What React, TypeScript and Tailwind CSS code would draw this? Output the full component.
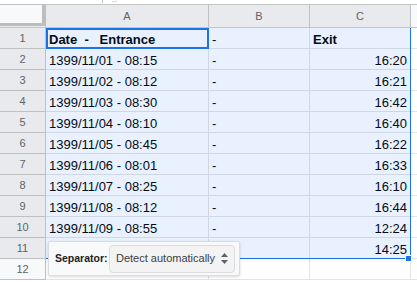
import React from "react";

const rows: [string, string, string][] = [
  ["Date  -   Entrance", "-", "Exit"],
  ["1399/11/01 - 08:15", "-", "16:20"],
  ["1399/11/02 - 08:12", "-", "16:21"],
  ["1399/11/03 - 08:30", "-", "16:42"],
  ["1399/11/04 - 08:10", "-", "16:40"],
  ["1399/11/05 - 08:45", "-", "16:22"],
  ["1399/11/06 - 08:01", "-", "16:33"],
  ["1399/11/07 - 08:25", "-", "16:10"],
  ["1399/11/08 - 08:12", "-", "16:44"],
  ["1399/11/09 - 08:55", "-", "12:24"],
  ["", "", "14:25"],
  ["", "", ""],
];

function UpDown() {
  return (
    <svg width="9" height="13" viewBox="0 0 9 13" className="text-[#5f6368]">
      <path d="M4.5 1 L8 5 H1 Z" fill="currentColor" />
      <path d="M4.5 12 L8 8 H1 Z" fill="currentColor" />
    </svg>
  );
}

export default function App() {
  return (
    <div className="relative w-[417px] h-[282px] overflow-hidden bg-white font-['Liberation_Sans',Arial,sans-serif] text-[#000]">
      {/* strip above the headers */}
      <div className="h-[4px] flex">
        <div className="ml-[102px] w-px h-[3px] bg-[#c4c4c4]" />
        <div className="ml-[9px] mt-px w-[5px] h-px bg-[#dadce0]" />
      </div>

      {/* column headers */}
      <div className="flex h-[24px] border-y border-[#c4c4c4] text-[11px] text-[#5f6368]">
        <div className="w-[46px] shrink-0 border-r border-[#c0c0c0] bg-[#e8eaed]">
          <div className="w-[45px] h-[21px] bg-[#f8f9fa] border-r-[3px] border-b-[3px] border-[#bdbdbd]" />
        </div>
        <div className="w-[163px] shrink-0 border-r border-[#c0c0c0] bg-[#e8eaed] flex items-center justify-center">A</div>
        <div className="w-[101px] shrink-0 border-r border-[#c0c0c0] bg-[#e8eaed] flex items-center justify-center">B</div>
        <div className="w-[101px] shrink-0 border-r border-[#c0c0c0] bg-[#e8eaed] flex items-center justify-center">C</div>
        <div className="flex-1 bg-[#f8f9fa]" />
      </div>

      {/* body rows */}
      {rows.map((r, i) => (
        <div key={i} className="flex h-[21px] text-[13px] leading-[16px]">
          <div
            className={
              i < 11
                ? "w-[46px] shrink-0 border-r border-b border-[#c0c0c0] bg-[#e8eaed] text-[11px] text-[#5f6368] flex items-center justify-center"
                : "w-[46px] shrink-0 border-r border-b border-[#c0c0c0] bg-[#f8f9fa] text-[11px] text-[#5f6368] flex items-center justify-center"
            }
          >
            {i + 1}
          </div>
          <div
            className={
              i === 0
                ? "w-[163px] shrink-0 border-r border-b border-[#e2e3e3] pl-[3px] flex items-end font-bold whitespace-pre"
                : "w-[163px] shrink-0 border-r border-b border-[#e2e3e3] pl-[3px] flex items-end whitespace-pre"
            }
          >
            {r[0]}
          </div>
          <div className="w-[101px] shrink-0 border-r border-b border-[#e2e3e3] pl-[3px] flex items-end">{r[1]}</div>
          <div
            className={
              i === 0
                ? "w-[101px] shrink-0 border-r border-b border-[#e2e3e3] pl-[3px] flex items-end font-bold"
                : "w-[101px] shrink-0 border-r border-b border-[#e2e3e3] pr-[3px] flex items-end justify-end"
            }
          >
            {r[2]}
          </div>
          <div className="flex-1 border-b border-[#e2e3e3]" />
        </div>
      ))}

      {/* selected range A1:C11 */}
      <div className="pointer-events-none absolute left-[46px] top-[28px] w-[365px] h-[231px] bg-[#1a73e8]/10 border-r border-b border-[#1a73e8]" />
      {/* active cell */}
      <div className="pointer-events-none absolute left-[46px] top-[28px] w-[163px] h-[21px] border-2 border-[#1a73e8]" />
      {/* fill handle */}
      <div className="absolute left-[405px] top-[255px] w-[7px] h-[7px] bg-[#1a73e8] border border-white" />

      {/* separator popup */}
      <div className="absolute left-[48px] top-[241px] w-[192px] h-[35px] bg-[#f8f9fa] border border-[#dadce0] rounded-[2px] shadow-[0_1px_3px_rgba(0,0,0,0.15)] flex items-center pl-[6px] pr-[4px]">
        <span className="text-[10.5px] font-bold text-[#202124] whitespace-nowrap">Separator:</span>
        <div className="ml-auto w-[126px] h-[28px] rounded-[4px] border border-[#dadce0] bg-[#f3f3f3] flex items-center pl-[6px] pr-[5px] text-[11px] text-[#3c4043] whitespace-nowrap">
          <span>Detect automatically</span>
          <span className="ml-auto flex">
            <UpDown />
          </span>
        </div>
      </div>
    </div>
  );
}
